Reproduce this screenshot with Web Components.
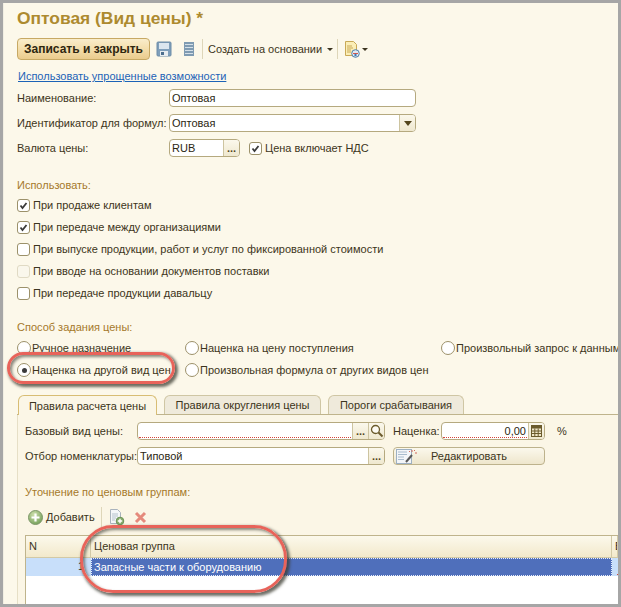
<!DOCTYPE html>
<html lang="ru">
<head>
<meta charset="utf-8">
<title>Оптовая (Вид цены)</title>
<style>
  html, body { margin: 0; padding: 0; background: #a6a6a6; }
  body { font-family: "Liberation Sans", Arial, sans-serif; font-size: 11px; color: #3c3520; }
</style>
</head>
<body>
<price-page>
  <page-title>Оптовая (Вид цены) *</page-title>
  <main-toolbar style="margin-top:10px"></main-toolbar>
  <form-link style="margin-top:9px">Использовать упрощенные возможности</form-link>

  <form-row label="Наименование:" style="margin-top:6px"><text-box value="Оптовая" style="width:247px"></text-box></form-row>
  <form-row label="Идентификатор для формул:" style="margin-top:7px"><text-box value="Оптовая" btn="drop" style="width:247px"></text-box></form-row>
  <form-row label="Валюта цены:" style="margin-top:7px">
    <text-box value="RUB" btn="dots" style="width:71px"></text-box>
    <check-box on style="margin-left:9px">Цена включает НДС</check-box>
  </form-row>

  <group-label style="margin-top:21px">Использовать:</group-label>
  <check-box on style="margin-top:4px">При продаже клиентам</check-box>
  <check-box on style="margin-top:4px">При передаче между организациями</check-box>
  <check-box style="margin-top:4px">При выпуске продукции, работ и услуг по фиксированной стоимости</check-box>
  <check-box off style="margin-top:4px">При вводе на основании документов поставки</check-box>
  <check-box style="margin-top:4px">При передаче продукции давальцу</check-box>

  <group-label style="margin-top:18px">Способ задания цены:</group-label>
  <radio-grid style="margin-top:5px">
    <radio-item>Ручное назначение</radio-item>
    <radio-item>Наценка на цену поступления</radio-item>
    <radio-item>Произвольный запрос к данным</radio-item>
    <radio-item on>Наценка на другой вид цен</radio-item>
    <radio-item>Произвольная формула от других видов цен</radio-item>
  </radio-grid>

  <tab-bar style="margin-top:16px">
    <tab-item on style="width:139px">Правила расчета цены</tab-item>
    <tab-item style="width:157px">Правила округления цены</tab-item>
    <tab-item style="width:136px">Пороги срабатывания</tab-item>
  </tab-bar>
  <tab-panel>
    <panel-rules></panel-rules>
    <group-label style="margin-top:20px">Уточнение по ценовым группам:</group-label>
    <grid-toolbar style="margin-top:7px"></grid-toolbar>
    <price-grid style="margin-top:7px"></price-grid>
  </tab-panel>

  <red-mark style="left:7px;top:352px;width:168px;height:32px"></red-mark>
  <red-mark style="left:80px;top:525px;width:207px;height:68px;border-radius:33px"></red-mark>
</price-page>

<script>
function define(name, css, html) {
  customElements.define(name, class extends HTMLElement {
    constructor() {
      super();
      this.attachShadow({ mode: "open" });
      this.shadowRoot.innerHTML = "<style>" + css + "</style>" + (typeof html === "function" ? html(this) : html);
    }
  });
}

const ICON_SAVE = `<svg width="16" height="16" viewBox="0 0 16 16"><rect x="1" y="1" width="14" height="14" rx="1" fill="#7f9fbb" stroke="#6d8ca8"/><rect x="3" y="2" width="10" height="6" fill="#dbe6ef"/><rect x="4" y="10" width="8" height="5" fill="#e8edf1"/><rect x="5" y="11" width="3" height="3" fill="#4d6f8e"/></svg>`;
const ICON_LIST = `<svg width="12" height="16" viewBox="0 0 12 16"><rect x="1" y="1" width="10" height="14" fill="#7f9bb2"/><g fill="#d5e0e8"><rect x="2" y="3" width="8" height="1"/><rect x="2" y="6" width="8" height="1"/><rect x="2" y="9" width="8" height="1"/><rect x="2" y="12" width="8" height="1"/></g></svg>`;
const ICON_REPORT = `<svg width="16" height="17" viewBox="0 0 16 17"><path d="M1.5.5h8l3 3v11h-11z" fill="#fbeeb6" stroke="#c9a956"/><path d="M3 5h5M3 7h6M3 9h4M3 11h4" stroke="#c9a956"/><circle cx="11.5" cy="12.5" r="3.8" fill="#dfe9f2" stroke="#4e7ea8"/><path d="M9 12.500h5" stroke="#d8574a"/><circle cx="11.500" cy="14" r="1.200" fill="#3d78b5"/></svg>`;
const ICON_ADD = `<svg width="15" height="15" viewBox="0 0 15 15"><defs><radialGradient id="g" cx=".4" cy=".3" r=".8"><stop offset="0" stop-color="#cfe0ad"/><stop offset="1" stop-color="#6c9a52"/></radialGradient></defs><circle cx="7.500" cy="7.500" r="7" fill="url(#g)" stroke="#7d9668"/><path d="M7.500 3.500v8M3.500 7.500h8" stroke="#fff" stroke-width="2.200"/></svg>`;
const ICON_DOC = `<svg width="16" height="16" viewBox="0 0 16 16"><path d="M1.500.5h7l3 3v11h-10z" fill="#f4f6f8" stroke="#a9b3bd"/><path d="M3 5h6M3 7h6M3 9h4M3 11h3" stroke="#b5c2cd"/><circle cx="11" cy="12" r="3.800" fill="#86ad6c" stroke="#6b9155"/><path d="M11 9.800v4.400M8.800 12h4.400" stroke="#fff" stroke-width="1.400"/></svg>`;
const ICON_DEL = `<svg width="13" height="13" viewBox="0 0 13 13"><path d="M2 2l9 9M11 2l-9 9" stroke="#e58a7c" stroke-width="3"/></svg>`;
const ICON_FIND = `<svg width="14" height="14" viewBox="0 0 14 14"><circle cx="5.500" cy="5.500" r="4" fill="#fdfbf3" stroke="#6b5b2c" stroke-width="1.300"/><path d="M8.500 8.500l4 4" stroke="#6b5b2c" stroke-width="2"/></svg>`;
const ICON_CALC = `<svg width="11" height="12" viewBox="0 0 11 12"><rect x=".5" y=".5" width="10" height="11" fill="#efe6c8" stroke="#6b5b2c"/><rect x=".5" y=".5" width="10" height="3" fill="#6b5b2c"/><path d="M.5 6h10M.5 8.500h10M3.800 3.500v8M7.200 3.500v8" stroke="#6b5b2c"/></svg>`;
const ICON_WAND = `<svg width="22" height="15" viewBox="0 0 22 15"><rect x=".5" y=".5" width="15" height="14" fill="#f3f5f8" stroke="#9db0c3"/><path d="M2 3h9M2 5.500h9M2 8h6M2 10.500h6" stroke="#a8bbcd"/><path d="M10 13l6-7" stroke="#575757" stroke-width="2"/><path d="M16 1v2M19 4h2M18 2l1-1M14 3l-1-1" stroke="#d0695c"/></svg>`;

define("price-page", `
  :host { display: block; width: 621px; height: 607px; box-sizing: border-box; padding: 3px; position: relative; overflow: hidden; }
  .surface { box-sizing: border-box; height: 601px; background: #fcf8ea; padding: 5px 0 0 13px; overflow: hidden; display: flex; flex-direction: column; border-left: 1px solid #f1eee2; }
`, `<div class="surface"><slot></slot></div>`);

define("page-title", `
  :host { display: block; height: 20px; line-height: 20px; font-size: 17.400px; font-weight: bold; color: #ad8a2f; white-space: nowrap; }
`, `<slot></slot>`);

define("main-toolbar", `
  :host { display: flex; align-items: center; height: 22px; flex: none; }
  .main { box-sizing: border-box; height: 22px; width: 133px; border: 1px solid #c7a964; border-radius: 4px; background: linear-gradient(#f9edcb, #f3dca8 55%, #eacb8d); color: #2e2610; font-weight: bold; font-size: 12px; display: flex; align-items: center; justify-content: center; white-space: nowrap; }
  .ic { display: flex; margin-left: 6px; }
  .sep { width: 1px; height: 20px; background: #ded6b9; margin: 0 5px 0 7px; }
  .caret { width: 0; height: 0; border: 3px solid transparent; border-top: 3px solid #3c3520; border-bottom: 0; margin-left: 5px; }
  .txt { white-space: nowrap; }
`, `<div class="main">Записать и закрыть</div>
  <span class="ic">${ICON_SAVE}</span><span class="ic" style="margin-left:11px">${ICON_LIST}</span>
  <div class="sep"></div><span class="txt">Создать на основании</span><i class="caret"></i>
  <div class="sep" style="margin-left:4px"></div><span class="ic" style="margin-left:1px">${ICON_REPORT}</span><i class="caret" style="margin-left:2px"></i>`);

define("form-link", `
  :host { display: block; height: 14px; line-height: 14px; color: #1c63b7; text-decoration: underline; margin-left: 1px; white-space: nowrap; }
`, `<slot></slot>`);

define("form-row", `
  :host { display: flex; align-items: center; height: 18px; flex: none; white-space: nowrap; }
  .lab { width: 152px; flex: none; }
`, (el) => `<span class="lab">${el.getAttribute("label")}</span><slot></slot>`);

customElements.define("text-box", class extends HTMLElement {
  constructor() {
    super();
    this.attachShadow({ mode: "open" });
    const btn = this.getAttribute("btn") || "";
    const parts = btn ? btn.split(" ") : [];
    const inner = parts.map((b) => {
      if (b === "drop") return `<span class="b"><i class="drop"></i></span>`;
      if (b === "dots") return `<span class="b dots">...</span>`;
      if (b === "find") return `<span class="b">${ICON_FIND}</span>`;
      if (b === "calc") return `<span class="b">${ICON_CALC}</span>`;
      return "";
    }).join("");
    const val = this.getAttribute("value") || "";
    const right = this.hasAttribute("right");
    const req = this.hasAttribute("req");
    this.shadowRoot.innerHTML = `<style>
      :host { display: flex; box-sizing: border-box; height: 18px; flex: none; border: 1px solid #b5a97f; border-radius: 4px; background: #fff; overflow: hidden; }
      .v { flex: 1; min-width: 0; padding: 0 2px; line-height: 16px; color: #2b2612; position: relative; text-align: ${right ? "right" : "left"}; white-space: nowrap; }
      .v.req::after { content: ""; position: absolute; left: 1px; right: 1px; bottom: 1px; border-bottom: 1px dotted #d6453a; }
      .b { width: 15px; flex: none; display: flex; align-items: center; justify-content: center; border-left: 1px solid #cdc4a0; background: linear-gradient(#fbf8ec, #efe8cf); }
      .dots { align-items: flex-start; line-height: 17px; font-weight: bold; color: #54461d; }
      .drop { width: 0; height: 0; border: 4px solid transparent; border-top: 5px solid #54461d; border-bottom: 0; }
    </style><div class="v ${req ? "req" : ""}">${val}</div>${inner}`;
  }
});

define("check-box", `
  :host { display: flex; align-items: center; height: 18px; flex: none; white-space: nowrap; }
  .box { box-sizing: border-box; width: 13px; height: 13px; border: 1px solid #9c916a; border-radius: 3px; background: #fff; margin-right: 3px; flex: none; display: flex; }
  :host([off]) .box { border-color: #e0dac4; background: #faf7ec; }
`, (el) => `<span class="box">${el.hasAttribute("on") ? `<svg width="11" height="11" viewBox="0 0 11 11"><path d="M2.500 5.500l2 2.500 4-5" fill="none" stroke="#3a3a3a" stroke-width="1.800"/></svg>` : ""}</span><slot></slot>`);

define("radio-grid", `
  :host { display: grid; grid-template-columns: 168px 256px 1fr; grid-auto-rows: 18px; row-gap: 4px; flex: none; }
`, `<slot></slot>`);

define("radio-item", `
  :host { display: flex; align-items: center; white-space: nowrap; }
  .r { box-sizing: border-box; width: 14px; height: 14px; border: 1px solid #9c916a; border-radius: 50%; background: #fff; margin-right: 1px; flex: none; display: flex; align-items: center; justify-content: center; }
  .r i { width: 5px; height: 5px; border-radius: 50%; background: #3a3a3a; }
`, (el) => `<span class="r">${el.hasAttribute("on") ? "<i></i>" : ""}</span><slot></slot>`);

define("tab-bar", `
  :host { display: flex; gap: 7px; height: 20px; flex: none; padding-left: 1px; box-sizing: border-box; border-bottom: 1px solid #bfb48c; }
`, `<slot></slot>`);

define("tab-item", `
  :host { display: flex; align-items: center; justify-content: center; box-sizing: border-box; height: 19px; border: 1px solid #cfc6a4; border-bottom: 0; border-radius: 6px 6px 0 0; background: #efeadb; white-space: nowrap; }
  :host([on]) { height: 20px; background: #fbf6e6; border-color: #d8bd74; }
`, `<slot></slot>`);

define("tab-panel", `
  :host { display: block; flex: 1; min-height: 0; padding: 7px 0 0 7px; background: #fbf6e6; border-left: 1px solid #e6dfc6; }
`, `<slot></slot>`);

define("group-label", `
  :host { display: block; height: 14px; line-height: 14px; color: #a5792a; white-space: nowrap; }
`, `<slot></slot>`);

define("panel-rules", `
  :host { display: grid; grid-template-columns: 112px 248px 56px 104px auto; grid-auto-rows: 18px; row-gap: 7px; align-items: center; white-space: nowrap; }
  .after { padding-left: 8px; }
  .edit { grid-column: 3 / 5; margin-left: 8px; box-sizing: border-box; height: 18px; border: 1px solid #bdb28c; border-radius: 4px; background: linear-gradient(#fbf8ec, #eee6cc); display: flex; align-items: center; position: relative; justify-content: center; }
  .edit svg { position: absolute; left: 2px; top: 1px; }
  .pct { padding-left: 12px; }
`, `<span>Базовый вид цены:</span>
  <text-box req btn="dots find"></text-box>
  <span class="after">Наценка:</span>
  <text-box req right value="0,00" btn="calc"></text-box>
  <span class="pct">%</span>
  <span>Отбор номенклатуры:</span>
  <text-box value="Типовой" btn="dots"></text-box>
  <div class="edit">${ICON_WAND}Редактировать</div>`);

define("grid-toolbar", `
  :host { display: flex; align-items: center; height: 22px; white-space: nowrap; }
  .add { display: flex; margin: 0 3px 0 3px; }
  .sep { width: 1px; height: 20px; background: #ded6b9; margin: 0 7px 0 6px; }
  .del { display: flex; margin-left: 9px; }
`, `<span class="add">${ICON_ADD}</span>Добавить<div class="sep"></div>${ICON_DOC}<span class="del">${ICON_DEL}</span>`);

define("price-grid", `
  :host { display: grid; grid-template-columns: 65px 521px 1fr; grid-template-rows: 22px 18px 40px; border-top: 1px solid #bfb48c; border-left: 1px solid #bfb48c; background: #fff; }
  .h { background: linear-gradient(#fcf9ec, #f2e9cb); border-right: 1px solid #d2c9a6; border-bottom: 1px solid #d2c9a6; padding-left: 3px; line-height: 21px; box-sizing: border-box; white-space: nowrap; overflow: hidden; }
  .c { background: #c8dffa; box-sizing: border-box; line-height: 16px; padding: 0 2px; overflow: hidden; white-space: nowrap; }
  .n { text-align: right; color: #2b2612; padding-right: 7px; }
  .sel { background: #4f6fbb; color: #fff; border: 1px dotted #e8eefb; }
  .req { position: relative; }
  .req::after { content: ""; position: absolute; left: 5px; right: 0; bottom: 1px; border-bottom: 1px dotted #d6453a; }
`, `<div class="h">N</div><div class="h">Ценовая группа</div><div class="h">В</div>
  <div class="c n">1</div><div class="c sel">Запасные части к оборудованию</div><div class="c req"></div>`);

define("red-mark", `
  :host { position: absolute; box-sizing: border-box; border: 3px solid #e8635a; border-radius: 16px; box-shadow: 2px 2px 3px 1px rgba(60,60,50,.75), inset 2px 2px 3px rgba(60,60,50,.6); pointer-events: none; }
`, ``);
</script>
</body>
</html>
